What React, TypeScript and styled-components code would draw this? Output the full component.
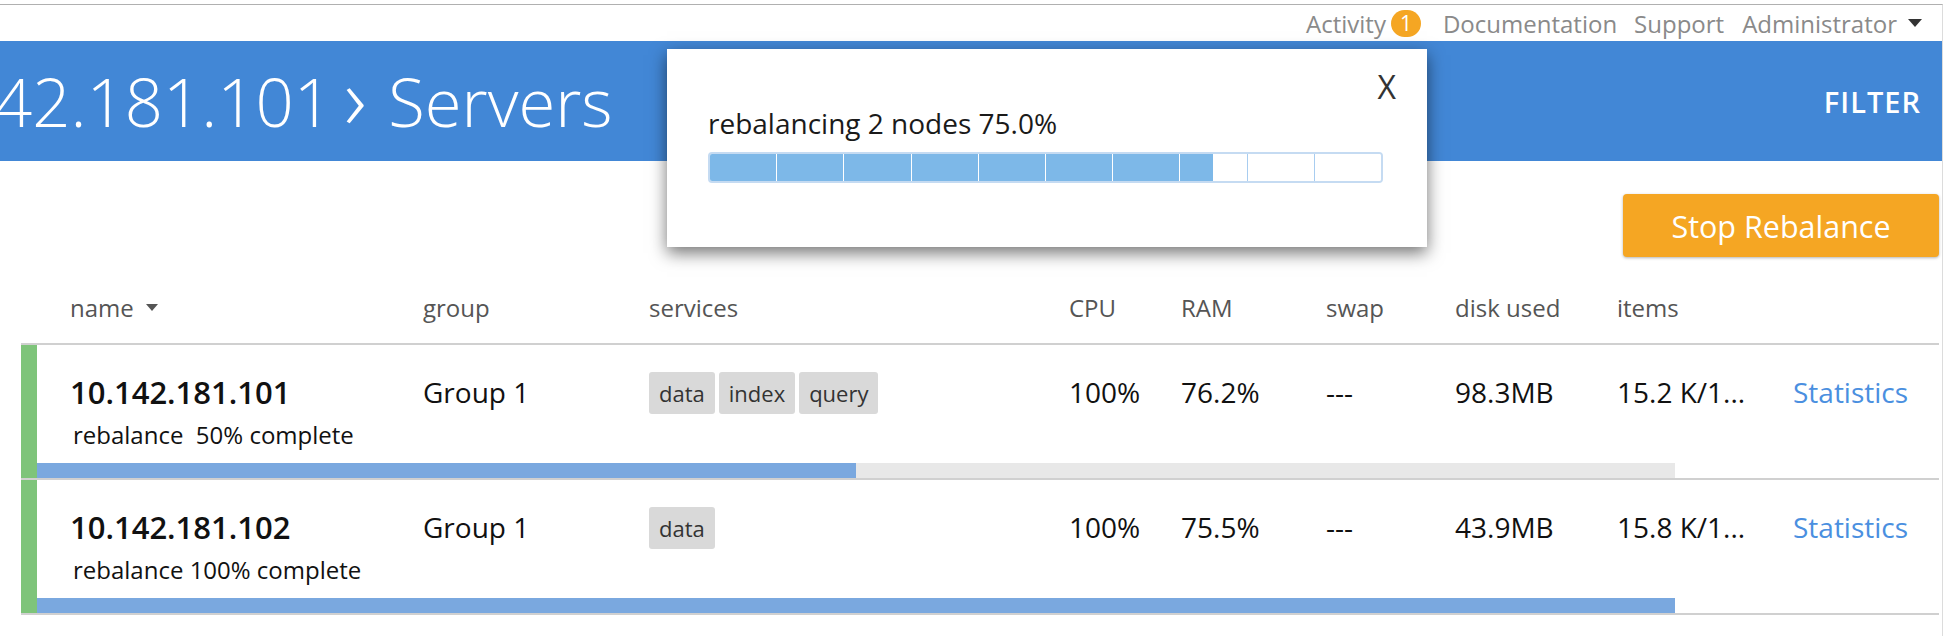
import styled, { createGlobalStyle } from "styled-components";

const GlobalStyle = createGlobalStyle`
  html, body {
    margin: 0;
    padding: 0;
    background: #fff;
  }
  body {
    font-family: "Open Sans", "Noto Sans", sans-serif;
    overflow: hidden;
  }
  * {
    box-sizing: border-box;
  }
`;

const columns = "353px 226px 420px 112px 145px 129px 162px 176px 1fr";

const Page = styled.div`
  position: relative;
  width: 1943px;
  height: 632px;
  margin-top: 4px;
  border-top: 1px solid #b0b0b0;
  border-right: 1px solid #dcdcdc;
`;

const TopBar = styled.div`
  height: 36px;
  display: flex;
  justify-content: flex-end;
  align-items: center;
  padding-right: 20px;
  font-size: 24px;
  color: #8a8a8a;
`;

const NavLink = styled.span<{ $gap?: number }>`
  display: flex;
  align-items: center;
  margin-left: ${(p) => p.$gap ?? 17}px;
  white-space: nowrap;
`;

const Badge = styled.span`
  margin-left: 5px;
  width: 30px;
  height: 27px;
  border-radius: 14px;
  background: #f5a623;
  color: #fff;
  font-size: 21px;
  line-height: 27px;
  text-align: center;
`;

const Caret = styled.span<{ $color?: string; $size?: number }>`
  display: inline-block;
  width: 0;
  height: 0;
  border-left: ${(p) => p.$size ?? 7}px solid transparent;
  border-right: ${(p) => p.$size ?? 7}px solid transparent;
  border-top: ${(p) => (p.$size ?? 7) + 1}px solid ${(p) => p.$color ?? "#333"};
`;

const Banner = styled.div`
  height: 120px;
  background: #4287d6;
  display: flex;
  align-items: center;
  justify-content: space-between;
  padding-right: 21px;
`;

const Title = styled.h1`
  display: flex;
  align-items: center;
  margin: 0 0 0 -6px;
  font-size: 67px;
  font-weight: 300;
  line-height: 90px;
  color: #fff;
  white-space: nowrap;
`;

const Chevron = styled.span`
  margin: 0 22px 0 12px;
  padding-bottom: 10px;
  font-size: 88px;
  line-height: 88px;
`;

const Filter = styled.span`
  font-size: 29px;
  font-weight: 600;
  letter-spacing: 1px;
  color: #fff;
`;

const Toolbar = styled.div`
  display: flex;
  justify-content: flex-end;
  padding: 33px 3px 0 0;
`;

const StopButton = styled.button`
  width: 316px;
  height: 63px;
  border: none;
  border-radius: 4px;
  background: #f5a623;
  color: #fff;
  font-family: inherit;
  font-size: 30.5px;
  box-shadow: 0 1px 3px rgba(0, 0, 0, 0.3);
`;

const Table = styled.div`
  margin: 0 3px 0 21px;
`;

const HeadRow = styled.div`
  display: grid;
  grid-template-columns: ${columns};
  padding: 34px 0 19px 49px;
  border-bottom: 2px solid #d0d0d0;
  font-size: 24px;
  line-height: 33px;
  color: #555;
`;

const HeadLabel = styled.span`
  display: inline-flex;
  align-items: center;
  gap: 12px;
`;

const Row = styled.div`
  display: flex;
  border-bottom: 2px solid #d0d0d0;
`;

const Status = styled.div`
  flex: none;
  width: 16px;
  background: #7ec47a;
`;

const RowBody = styled.div`
  flex: 1;
`;

const Cells = styled.div`
  display: grid;
  grid-template-columns: ${columns};
  align-items: start;
  height: 118px;
  padding: 27px 0 0 33px;
`;

const Value = styled.div`
  font-size: 28px;
  line-height: 40px;
  color: #111;
  white-space: nowrap;
`;

const NodeName = styled.div`
  font-size: 31px;
  font-weight: 600;
  line-height: 40px;
  color: #111;
`;

const NodeNote = styled.div`
  margin-top: 7px;
  padding-left: 3px;
  font-size: 24px;
  line-height: 32px;
  color: #111;
  white-space: pre;
`;

const Tags = styled.div`
  display: flex;
  gap: 4px;
`;

const Tag = styled.span`
  height: 42px;
  padding: 0 10px;
  border-radius: 3px;
  background: #d9d9d9;
  font-size: 22px;
  line-height: 42px;
  color: #333;
`;

const StatsLink = styled.a`
  font-size: 28px;
  line-height: 40px;
  color: #4a8fe0;
  text-decoration: none;
`;

const Track = styled.div`
  width: 1638px;
  height: 15px;
  background: #e8e8e8;
`;

const Fill = styled.div`
  height: 100%;
  background: #7aa8df;
`;

const Modal = styled.div`
  position: absolute;
  left: 667px;
  top: 44px;
  width: 760px;
  height: 198px;
  padding: 21px 31px 0 41px;
  background: #fff;
  box-shadow: 0 6px 16px rgba(0, 0, 0, 0.55);
`;

const CloseRow = styled.div`
  display: flex;
  justify-content: flex-end;
  font-size: 32px;
  line-height: 34px;
  color: #333;
`;

const Message = styled.div`
  margin-top: 1px;
  font-size: 28px;
  line-height: 36px;
  color: #1a1a1a;
`;

const Bar = styled.div`
  display: flex;
  width: 675px;
  height: 31px;
  margin-top: 11px;
  border: 2px solid #c5dbf2;
  border-radius: 4px;
  overflow: hidden;
`;

const Segment = styled.div<{ $fill: number; $first: boolean }>`
  flex: 1;
  border-left: ${(p) => (p.$first ? "none" : p.$fill > 0 ? "1px solid #fff" : "1px solid #a8cdf0")};
  background: linear-gradient(
    to right,
    #7db8e8 ${(p) => p.$fill * 100}%,
    #fff ${(p) => p.$fill * 100}%
  );
`;

type Node = {
  name: string;
  note: string;
  group: string;
  services: string[];
  cpu: string;
  ram: string;
  swap: string;
  disk: string;
  items: string;
  progress: number;
};

const nodes: Node[] = [
  {
    name: "10.142.181.101",
    note: "rebalance  50% complete",
    group: "Group 1",
    services: ["data", "index", "query"],
    cpu: "100%",
    ram: "76.2%",
    swap: "---",
    disk: "98.3MB",
    items: "15.2 K/1...",
    progress: 50,
  },
  {
    name: "10.142.181.102",
    note: "rebalance 100% complete",
    group: "Group 1",
    services: ["data"],
    cpu: "100%",
    ram: "75.5%",
    swap: "---",
    disk: "43.9MB",
    items: "15.8 K/1...",
    progress: 100,
  },
];

const overall = 75;

export default function App() {
  const segments = Array.from({ length: 10 }, (_, i) =>
    Math.max(0, Math.min(1, overall / 10 - i))
  );

  return (
    <>
      <GlobalStyle />
      <Page>
        <TopBar>
          <NavLink $gap={0}>Activity</NavLink>
          <Badge>1</Badge>
          <NavLink $gap={22}>Documentation</NavLink>
          <NavLink>Support</NavLink>
          <NavLink $gap={18}>Administrator</NavLink>
          <NavLink $gap={11}>
            <Caret />
          </NavLink>
        </TopBar>

        <Banner>
          <Title>
            42.181.101<Chevron>›</Chevron>Servers
          </Title>
          <Filter>FILTER</Filter>
        </Banner>

        <Toolbar>
          <StopButton>Stop Rebalance</StopButton>
        </Toolbar>

        <Table>
          <HeadRow>
            <HeadLabel>
              name <Caret $color="#555" $size={6} />
            </HeadLabel>
            <HeadLabel>group</HeadLabel>
            <HeadLabel>services</HeadLabel>
            <HeadLabel>CPU</HeadLabel>
            <HeadLabel>RAM</HeadLabel>
            <HeadLabel>swap</HeadLabel>
            <HeadLabel>disk used</HeadLabel>
            <HeadLabel>items</HeadLabel>
            <span />
          </HeadRow>

          {nodes.map((n) => (
            <Row key={n.name}>
              <Status />
              <RowBody>
                <Cells>
                  <div>
                    <NodeName>{n.name}</NodeName>
                    <NodeNote>{n.note}</NodeNote>
                  </div>
                  <Value>{n.group}</Value>
                  <Tags>
                    {n.services.map((s) => (
                      <Tag key={s}>{s}</Tag>
                    ))}
                  </Tags>
                  <Value>{n.cpu}</Value>
                  <Value>{n.ram}</Value>
                  <Value>{n.swap}</Value>
                  <Value>{n.disk}</Value>
                  <Value>{n.items}</Value>
                  <StatsLink href="#">Statistics</StatsLink>
                </Cells>
                <Track>
                  <Fill style={{ width: `${n.progress}%` }} />
                </Track>
              </RowBody>
            </Row>
          ))}
        </Table>

        <Modal>
          <CloseRow>X</CloseRow>
          <Message>rebalancing 2 nodes 75.0%</Message>
          <Bar>
            {segments.map((f, i) => (
              <Segment key={i} $fill={f} $first={i === 0} />
            ))}
          </Bar>
        </Modal>
      </Page>
    </>
  );
}
